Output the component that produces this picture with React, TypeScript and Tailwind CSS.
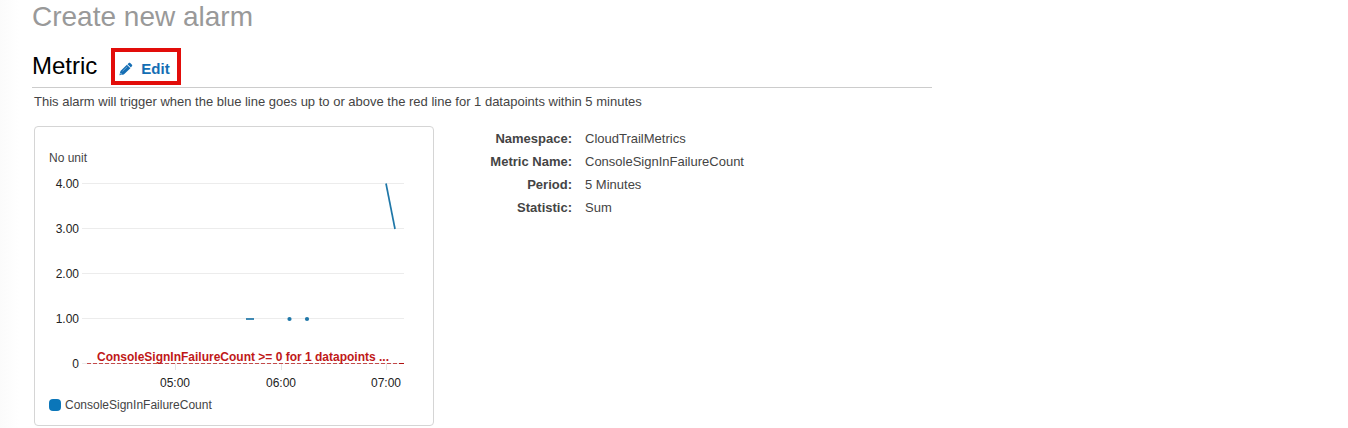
const gridLines = [
  { label: "4.00", y: 15 },
  { label: "3.00", y: 60 },
  { label: "2.00", y: 105 },
  { label: "1.00", y: 150 },
  { label: "0", y: 195 },
];

const timeTicks = [
  { label: "05:00", x: 126 },
  { label: "06:00", x: 232 },
  { label: "07:00", x: 337 },
];

const details = [
  { term: "Namespace:", value: "CloudTrailMetrics" },
  { term: "Metric Name:", value: "ConsoleSignInFailureCount" },
  { term: "Period:", value: "5 Minutes" },
  { term: "Statistic:", value: "Sum" },
];

function PencilIcon() {
  return (
    <svg viewBox="0 0 14 14" className="size-3.5" fill="#146eb4" aria-hidden="true">
      <path d="M.4 13.3 1.5 8.9 7.9 2.8l3.5 3.5-6.6 6.2zM8.5 2.2 9.8 1c.5-.4 1-.4 1.4 0l1.8 1.8c.4.4.4.9 0 1.3L11.900 5.600z" />
      <path d="M3.500 9.200 8.200 4.700" stroke="#a9cbe4" strokeWidth=".6" />
      <path d="m1.700 10.900 1.300 1.300-1.100.3-.5-.5z" fill="#fff" />
    </svg>
  );
}

function MetricChart() {
  return (
    <svg
      viewBox="0 0 355 227"
      className="block w-full"
      role="img"
      aria-label="ConsoleSignInFailureCount over time"
    >
      {gridLines.map(({ label, y }) => (
        <g key={label}>
          <rect x="33" y={y} width="322" height="1" fill="#ececec" />
          <text x="30" y={y + 5} textAnchor="end" fontSize="12" fill="#222">
            {label}
          </text>
        </g>
      ))}
      {timeTicks.map(({ label, x }) => (
        <g key={label}>
          <rect x={x} y="196" width="1" height="6" fill="#e4e4e4" />
          <text x={x} y="219" textAnchor="middle" fontSize="12" fill="#222">
            {label}
          </text>
        </g>
      ))}
      <g stroke="#1f77a8" strokeWidth="1.7" fill="none">
        <path d="M337 15.5 346 61" />
        <path d="M197 151h8" />
      </g>
      <g fill="#1f77a8">
        <circle cx="240.5" cy="151" r="2.1" />
        <circle cx="258" cy="151" r="2.1" />
      </g>
      <path d="M38 195.5h313" stroke="#c44a4a" strokeDasharray="4 2" />
      <path d="M350 195.5h5" stroke="#b01010" />
      <text x="48" y="193" fontSize="12" fontWeight="bold" fill="#c01818">
        ConsoleSignInFailureCount &gt;= 0 for 1 datapoints ...
      </text>
    </svg>
  );
}

export default function App() {
  return (
    <div className="flex min-h-screen bg-white font-['Liberation_Sans',Arial,sans-serif] text-[13px] leading-5 text-[#444]">
      <div className="w-8 shrink-0 bg-linear-to-r from-[#fbfbfb] to-white to-60%" />
      <main className="min-w-0 grow pt-px">
        <h1 className="text-[28px] leading-8 text-[#999]">Create new alarm</h1>
        <section className="mt-[15px] max-w-[900px]">
          <header className="flex items-center gap-3.5 border-b border-[#ccc] pb-0.5">
            <h2 className="pb-0.5 text-2xl leading-8 text-black">Metric</h2>
            <button
              type="button"
              className="flex items-center gap-2 border-4 border-[#e20d0a] pt-[5px] pr-[7px] pl-1 text-[15px] leading-6 font-bold text-[#146eb4]"
            >
              <PencilIcon />
              Edit
            </button>
          </header>
          <div className="pl-0.5">
            <p className="mt-1">
              This alarm will trigger when the blue line goes up to or above the red line for 1
              datapoints within 5 minutes
            </p>
            <div className="mt-3.5 flex">
              <figure className="w-[400px] shrink-0 rounded border border-[#d5d5d5] pt-[21px] pr-[29px] pb-2.5 pl-3.5 text-xs leading-5">
                <p>No unit</p>
                <MetricChart />
                <figcaption className="flex items-center gap-1">
                  <span className="size-3 rounded bg-[#0b76b9]" />
                  ConsoleSignInFailureCount
                </figcaption>
              </figure>
              <dl className="grid h-fit grid-cols-[138px_auto] gap-x-[13px] pt-px leading-[23px]">
                {details.map(({ term, value }) => (
                  <div key={term} className="contents">
                    <dt className="text-right font-bold">{term}</dt>
                    <dd>{value}</dd>
                  </div>
                ))}
              </dl>
            </div>
          </div>
        </section>
      </main>
    </div>
  );
}
